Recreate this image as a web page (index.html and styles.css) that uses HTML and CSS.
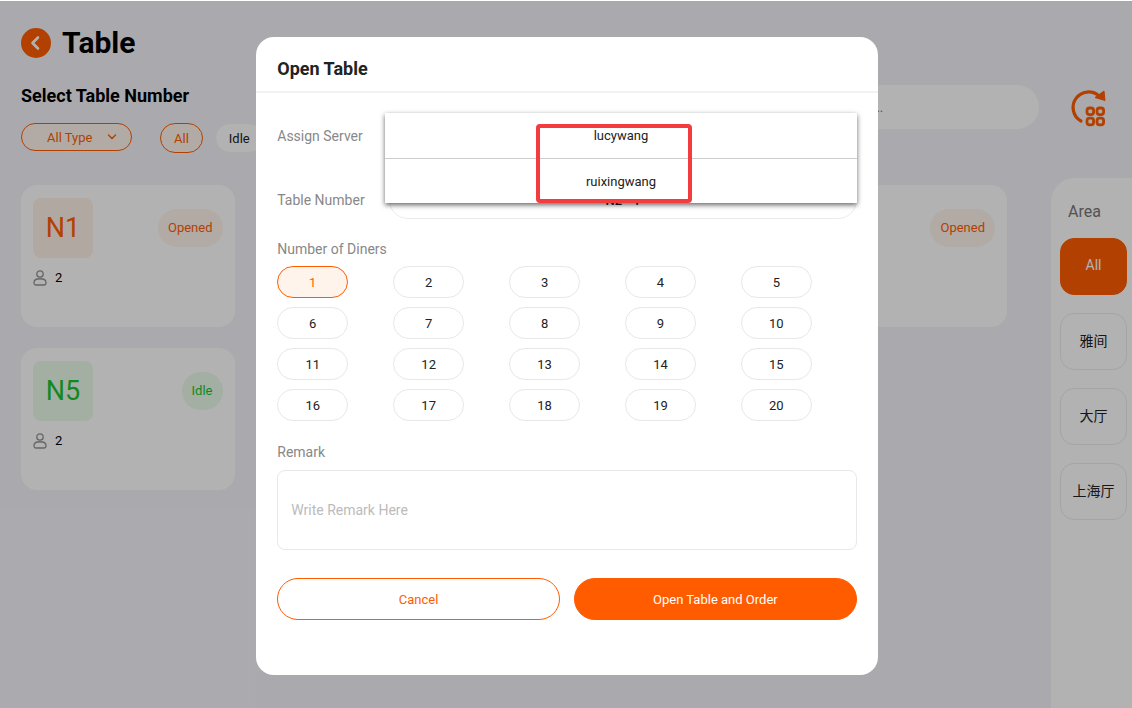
FILE: index.html
```html
<!DOCTYPE html>
<html lang="en">
<head>
	<meta charset="utf-8">
	<title>Table</title>
	<link rel="stylesheet" href="styles.css">
</head>
<body>
	<div class="page">
		<header class="header">
			<button class="back" type="button" aria-label="Back">
				<svg viewBox="0 0 30 30" width="30" height="30"><path d="M17 9.500l-5.500 5.500 5.500 5.500" fill="none" stroke="#fff" stroke-width="2.600" stroke-linecap="round" stroke-linejoin="round"/></svg>
			</button>
			<h1>Table</h1>
		</header>

		<div class="toolbar">
			<div class="filters">
				<h2>Select Table Number</h2>
				<div class="filter-row">
					<div class="type-wrap">
						<select class="type" aria-label="Type">
							<option>All Type</option>
						</select>
						<svg class="chevron" viewBox="0 0 10 6" width="10" height="6"><path d="M1.500 1l3.500 3.500 3.500-3.500" fill="none" stroke="#ff5c00" stroke-width="1.400" stroke-linecap="round"/></svg>
					</div>
					<button class="status active" type="button">All</button>
					<button class="status" type="button">Idle</button>
				</div>
			</div>
			<input class="search" type="text" placeholder="Please enter table number or name to search..." aria-label="Search">
			<button class="refresh" type="button" aria-label="Switch view">
				<svg viewBox="0 0 36 40" width="36" height="40">
					<path d="M11 33A15.500 15.500 0 1 1 29 8" fill="none" stroke="#ff5c00" stroke-width="3.200" stroke-linecap="round"/>
					<path d="M34 3l1 9.500-10-3z" fill="#ff5c00" stroke="#ff5c00" stroke-linejoin="round"/>
					<g fill="none" stroke="#ff5c00" stroke-width="2.800">
						<rect x="17" y="20" width="6.600" height="6.600" rx="2.600"/>
						<rect x="27" y="20" width="6.600" height="6.600" rx="2.600"/>
						<rect x="17" y="30.200" width="6.600" height="6.600" rx="2.600"/>
						<rect x="27" y="30.200" width="6.600" height="6.600" rx="2.600"/>
					</g>
				</svg>
			</button>
		</div>

		<div class="main">
			<div class="tables">
				<div class="card">
					<div class="card-top">
						<div class="name">N1</div>
						<span class="badge">Opened</span>
					</div>
					<div class="people">
						<svg viewBox="0 0 14 16" width="14" height="16" fill="none" stroke="#929292" stroke-width="1.300"><circle cx="7" cy="4" r="3.200"/><path d="M1 12.500c0-5 12-5 12 0 0 1.700-.7 2.500-2 2.500H3c-1.300 0-2-.8-2-2.500z"/></svg>
						<span>2</span>
					</div>
				</div>
				<div class="card last">
					<div class="card-top">
						<div class="name"></div>
						<span class="badge">Opened</span>
					</div>
				</div>
				<div class="card idle">
					<div class="card-top">
						<div class="name">N5</div>
						<span class="badge">Idle</span>
					</div>
					<div class="people">
						<svg viewBox="0 0 14 16" width="14" height="16" fill="none" stroke="#929292" stroke-width="1.300"><circle cx="7" cy="4" r="3.200"/><path d="M1 12.500c0-5 12-5 12 0 0 1.700-.7 2.500-2 2.500H3c-1.300 0-2-.8-2-2.500z"/></svg>
						<span>2</span>
					</div>
				</div>
			</div>
			<aside class="areas">
				<h3>Area</h3>
				<button class="area active" type="button">All</button>
				<button class="area" type="button">雅间</button>
				<button class="area" type="button">大厅</button>
				<button class="area" type="button">上海厅</button>
			</aside>
		</div>
	</div>

	<div class="overlay">
		<form class="modal">
			<h2 class="modal-title">Open Table</h2>
			<div class="modal-body">
				<div class="field">
					<span class="label" id="server">Assign Server</span>
					<div class="server">
						<div class="dropdown" role="listbox" aria-labelledby="server">
							<button class="option" type="button" role="option">lucywang</button>
							<button class="option" type="button" role="option">ruixingwang</button>
							<div class="highlight"></div>
						</div>
					</div>
				</div>
				<div class="field">
					<label class="label" for="tableNumber">Table Number</label>
					<input class="table-number" type="text" id="tableNumber" value="N2 - 1">
				</div>
				<div class="label">Number of Diners</div>
				<div class="diners">
					<button class="diner active" type="button">1</button>
					<button class="diner" type="button">2</button>
					<button class="diner" type="button">3</button>
					<button class="diner" type="button">4</button>
					<button class="diner" type="button">5</button>
					<button class="diner" type="button">6</button>
					<button class="diner" type="button">7</button>
					<button class="diner" type="button">8</button>
					<button class="diner" type="button">9</button>
					<button class="diner" type="button">10</button>
					<button class="diner" type="button">11</button>
					<button class="diner" type="button">12</button>
					<button class="diner" type="button">13</button>
					<button class="diner" type="button">14</button>
					<button class="diner" type="button">15</button>
					<button class="diner" type="button">16</button>
					<button class="diner" type="button">17</button>
					<button class="diner" type="button">18</button>
					<button class="diner" type="button">19</button>
					<button class="diner" type="button">20</button>
				</div>
				<label class="label" for="remark">Remark</label>
				<textarea class="remark" id="remark" placeholder="Write Remark Here"></textarea>
				<div class="actions">
					<button class="btn" type="button">Cancel</button>
					<button class="btn primary" type="submit">Open Table and Order</button>
				</div>
			</div>
		</form>
	</div>
</body>
</html>
```
FILE: styles.css
```css
* {
	box-sizing: border-box;
}
body {
	margin: 0;
	font-family: Roboto, "Noto Sans CJK SC", sans-serif;
	font-size: 13px;
	color: #222;
	background-color: #f4f4fa;
	border-top: 1px solid #fff;
}
h1, h2, h3 {
	margin: 0;
}
button, input, select, textarea {
	font-family: inherit;
	font-size: 13px;
	color: inherit;
}
button {
	padding: 0;
	border: none;
	cursor: pointer;
}
svg {
	display: block;
}
.page {
	display: flex;
	flex-direction: column;
	min-height: calc(100vh - 1px);
}

/* top of the page */
.header {
	display: flex;
	align-items: center;
	gap: 11px;
	padding: 24px 21px 0;
}
.header h1 {
	font-size: 30px;
	line-height: 36px;
	color: #000;
}
.back {
	width: 30px;
	height: 30px;
	border-radius: 50%;
	background-color: #ff5c00;
}
.toolbar {
	display: flex;
	align-items: flex-start;
	padding: 24px 26px 0 21px;
}
.filters {
	flex: 1;
}
.filters h2 {
	font-size: 18px;
	line-height: 22px;
	color: #000;
}
.filter-row {
	display: flex;
	align-items: flex-start;
	gap: 12px;
	margin-top: 16px;
}
.type-wrap {
	position: relative;
	margin-right: 16px;
}
.type {
	appearance: none;
	display: block;
	width: 111px;
	height: 28px;
	padding: 0 25px;
	border: 1px solid #ff5c00;
	border-radius: 14px;
	background-color: #fff4ec;
	color: #ff5c00;
}
.chevron {
	position: absolute;
	right: 15px;
	top: 11px;
}
.status {
	height: 30px;
	padding: 0 13px;
	border: 1px solid #f4f4f4;
	border-radius: 15px;
	background-color: #fff;
}
.status.active {
	border-color: #ff5c00;
	background-color: #fff4ec;
	color: #ff5c00;
}
.search {
	width: 445px;
	height: 44px;
	padding: 0 20px;
	border: none;
	border-radius: 22px;
	background-color: #fff;
}
.refresh {
	margin: 3px 0 0 31px;
	background: none;
}

/* tables */
.main {
	flex: 1;
	display: flex;
	align-items: stretch;
	gap: 44px;
	padding: 25px 0 0 21px;
}
.tables {
	flex: 1;
	display: grid;
	grid-template-columns: repeat(4, 1fr);
	grid-auto-rows: 142px;
	gap: 21px 44px;
	padding-top: 7px;
}
.card {
	padding: 13px 12px;
	border-radius: 16px;
	background-color: #fff;
}
.card.last {
	grid-column: 4;
}
.card-top {
	display: flex;
	align-items: center;
	justify-content: space-between;
}
.name {
	width: 60px;
	height: 60px;
	border-radius: 8px;
	background-color: #fff1e8;
	color: #ff5c00;
	font-size: 27px;
	line-height: 60px;
	text-align: center;
}
.badge {
	padding: 0 10px;
	border-radius: 19px;
	background-color: #fff4ec;
	color: #ff5c00;
	line-height: 38px;
}
.idle .name,
.idle .badge {
	background-color: #eafbea;
	color: #1bc42f;
}
.people {
	display: flex;
	gap: 8px;
	margin-top: 12px;
	color: #000;
}
.areas {
	display: flex;
	flex-direction: column;
	gap: 18px;
	width: 81px;
	padding: 26px 5px 0 9px;
	border-radius: 24px 0 0 0;
	background-color: #fff;
}
.areas h3 {
	padding-left: 8px;
	color: #777;
	font-size: 16px;
	font-weight: 400;
	line-height: 16px;
}
.area {
	height: 57px;
	padding-bottom: 3px;
	border: 1px solid #ececec;
	border-radius: 14px;
	background-color: #fff;
	font-size: 14px;
}
.area.active {
	border-color: #ff5c00;
	background-color: #ff5c00;
	color: #fff;
}

/* open table dialog */
.overlay {
	position: absolute;
	inset: 1px 0 0;
	display: flex;
	justify-content: center;
	align-items: flex-start;
	padding: 36px 0 36px 2px;
	background-color: rgba(0, 0, 0, 0.3);
}
.modal {
	width: 55%;
	border-radius: 18px;
	background-color: #fff;
}
.modal-title {
	padding: 21px 21px 11px;
	border-bottom: 2px solid #f3f3f3;
	font-size: 18px;
	line-height: 22px;
}
.modal-body {
	padding: 24px 21px 55px;
}
.field {
	display: flex;
	align-items: center;
	gap: 20px;
	height: 38px;
	margin-bottom: 26px;
}
.field + .field {
	margin-bottom: 20px;
}
.label {
	display: block;
	color: #888;
	font-size: 14px;
	line-height: 20px;
}
.field .label {
	width: 92px;
}
.server {
	flex: 1;
	position: relative;
	height: 38px;
}
.dropdown {
	position: absolute;
	left: -4px;
	right: 0;
	top: -4px;
	background-color: #fff;
	box-shadow: 0 2px 5px rgba(0, 0, 0, 0.6);
}
.option {
	display: block;
	width: 100%;
	height: 45px;
	background: none;
}
.option + .option {
	border-top: 1px solid #ccc;
}
.highlight {
	position: absolute;
	left: 32%;
	right: 35%;
	top: 11px;
	bottom: 0;
	border: 4px solid #f43b3e;
	border-radius: 4px;
}
.table-number {
	flex: 1;
	height: 38px;
	border: 1px solid #ececec;
	border-radius: 19px;
	text-align: center;
	font-weight: 500;
}
.diners {
	display: grid;
	grid-template-columns: repeat(5, 1fr);
	gap: 9px 0;
	margin: 7px 0 21px;
}
.diner {
	width: 71px;
	height: 32px;
	border: 1px solid #e8e8e8;
	border-radius: 16px;
	background-color: #fff;
}
.diner.active {
	border-color: #ff5c00;
	background-color: #fff4ec;
	color: #ff5c00;
}
.remark {
	display: block;
	width: 100%;
	height: 80px;
	margin-top: 8px;
	padding: 29px 13px;
	border: 1px solid #e8e8e8;
	border-radius: 8px;
	font-size: 14px;
	line-height: 20px;
	resize: none;
}
.remark::placeholder {
	color: #bbb;
}
.actions {
	display: flex;
	gap: 14px;
	margin-top: 28px;
}
.btn {
	flex: 1;
	height: 42px;
	border: 1px solid #ff5c00;
	border-radius: 21px;
	background-color: #fff;
	color: #ff5c00;
}
.btn.primary {
	background-color: #ff5c00;
	color: #fff;
}
```
